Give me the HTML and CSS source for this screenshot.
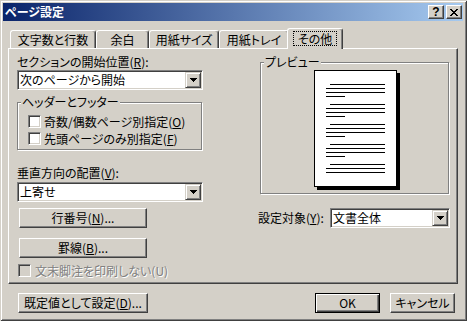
FILE: index.html
```html
<!DOCTYPE html>
<html lang="ja">
<head>
  <meta charset="UTF-8" />
  <title>ページ設定</title>
  <link rel="stylesheet" href="styles.css">
</head>
<body>

<div class="window">
  <div class="titlebar">
    <span class="title">ページ設定</span>
    <div class="caption-buttons">
      <span class="cap-btn help">?</span>
      <span class="cap-btn">
        <svg width="8" height="7" viewBox="0 0 8 7" shape-rendering="crispEdges"><path d="M0 0h2v1H0zM6 0h2v1H6zM1 1h2v1H1zM5 1h2v1H5zM2 2h4v1H2zM3 3h2v1H3zM2 4h4v1H2zM1 5h2v1H1zM5 5h2v1H5zM0 6h2v1H0zM6 6h2v1H6z"/></svg>
      </span>
    </div>
  </div>

  <div class="tabs">
    <div class="tab">文字数と行数</div>
    <div class="tab">余白</div>
    <div class="tab">用紙サイズ</div>
    <div class="tab">用紙トレイ</div>
    <div class="tab active"><span class="focus">その他</span></div>
  </div>

  <div class="panel">
    <!-- left column -->
    <div class="col-left">
      <div class="label">セクションの開始位置(<u>R</u>):</div>
      <div class="combo">
        <span class="combo-value">次のページから開始</span>
        <span class="combo-btn"><svg width="7" height="4" viewBox="0 0 7 4" shape-rendering="crispEdges"><path d="M0 0h7v1H0zM1 1h5v1H1zM2 2h3v1H2zM3 3h1v1H3z"/></svg></span>
      </div>

      <fieldset class="group">
        <legend>ヘッダーとフッター</legend>
        <label class="check"><span class="box"></span><span>奇数/偶数ページ別指定(<u>O</u>)</span></label>
        <label class="check"><span class="box"></span><span>先頭ページのみ別指定(<u>F</u>)</span></label>
      </fieldset>

      <div class="label label-gap">垂直方向の配置(<u>V</u>):</div>
      <div class="combo combo-tight">
        <span class="combo-value">上寄せ</span>
        <span class="combo-btn"><svg width="7" height="4" viewBox="0 0 7 4" shape-rendering="crispEdges"><path d="M0 0h7v1H0zM1 1h5v1H1zM2 2h3v1H2zM3 3h1v1H3z"/></svg></span>
      </div>

      <div class="btn btn-side">行番号(<u>N</u>)...</div>
      <div class="btn btn-side btn-lower">罫線(<u>B</u>)...</div>

      <label class="check disabled"><span class="box"></span><span>文末脚注を印刷しない(U)</span></label>
    </div>

    <!-- right column -->
    <div class="col-right">
      <fieldset class="group preview">
        <legend>プレビュー</legend>
        <svg class="page" width="86" height="120" viewBox="0 0 86 120" shape-rendering="crispEdges">
          <rect x="3" y="3" width="83" height="117" fill="#000"/>
          <rect x="0.5" y="0.5" width="82" height="116" fill="#fff" stroke="#000"/>
          <g fill="#000">
            <rect x="16" y="14" width="55" height="1"/>
            <rect x="12" y="18" width="59" height="1"/>
            <rect x="12" y="22" width="59" height="1"/>
            <rect x="12" y="26" width="19" height="1"/>
            <rect x="16" y="34" width="55" height="1"/>
            <rect x="12" y="38" width="59" height="1"/>
            <rect x="12" y="42" width="59" height="1"/>
            <rect x="12" y="46" width="19" height="1"/>
            <rect x="16" y="54" width="55" height="1"/>
            <rect x="12" y="58" width="59" height="1"/>
            <rect x="12" y="62" width="59" height="1"/>
            <rect x="12" y="66" width="19" height="1"/>
            <rect x="16" y="74" width="55" height="1"/>
            <rect x="12" y="78" width="59" height="1"/>
            <rect x="12" y="82" width="59" height="1"/>
            <rect x="12" y="86" width="19" height="1"/>
            <rect x="16" y="94" width="55" height="1"/>
            <rect x="12" y="98" width="59" height="1"/>
            <rect x="12" y="102" width="59" height="1"/>
          </g>
        </svg>
      </fieldset>

      <div class="apply-row">
        <span>設定対象(<u>Y</u>):</span>
        <div class="combo combo-small">
          <span class="combo-value">文書全体</span>
          <span class="combo-btn"><svg width="7" height="4" viewBox="0 0 7 4" shape-rendering="crispEdges"><path d="M0 0h7v1H0zM1 1h5v1H1zM2 2h3v1H2zM3 3h1v1H3z"/></svg></span>
        </div>
      </div>
    </div>
  </div>

  <div class="footer">
    <div class="btn btn-wide">既定値として設定(<u>D</u>)...</div>
    <div class="btn btn-default">OK</div>
    <div class="btn btn-cancel">キャンセル</div>
  </div>
</div>

</body>
</html>
```

FILE: styles.css
```css
* { box-sizing: border-box; }

body {
  margin: 0;
  font-family: "Noto Sans CJK JP", "Noto Sans", sans-serif;
  font-size: 12px;
  line-height: 14px;
  font-feature-settings: "palt";
  color: #000;
  background: #d4d0c8;
}

u { text-underline-offset: 1px; }

.window {
  width: 467px;
  height: 321px;
  padding: 3px 4px 4px 3px;
  background: #d4d0c8;
  box-shadow: inset 1px 1px #d4d0c8, inset -1px -1px #404040,
              inset 2px 2px #fff, inset -2px -2px #808080;
}

/* title bar */
.titlebar {
  height: 18px;
  display: flex;
  align-items: center;
  justify-content: space-between;
  padding: 0 1px 0 2px;
  background: linear-gradient(to right, #0a246a, #a6caf0);
}

.title {
  color: #fff;
  font-weight: bold;
}

.caption-buttons {
  display: flex;
  gap: 2px;
}

.cap-btn {
  width: 16px;
  height: 14px;
  display: flex;
  align-items: center;
  justify-content: center;
  background: #d4d0c8;
  border: 1px solid;
  border-color: #fff #404040 #404040 #fff;
  box-shadow: inset -1px -1px #808080;
}

.help {
  font-family: "Liberation Sans", Arial, sans-serif;
  font-weight: bold;
  font-size: 12px;
  line-height: 12px;
}

/* tabs */
.tabs {
  display: flex;
  align-items: flex-end;
  height: 20px;
  margin: 7px 0 0 5px;
  padding-left: 2px;
}

.tab {
  height: 18px;
  display: flex;
  align-items: center;
  justify-content: center;
  background: #d4d0c8;
  border: 1px solid;
  border-bottom: none;
  border-color: #fff #404040 #fff #fff;
  border-radius: 3px 3px 0 0;
  box-shadow: inset -1px 0 #808080;
}

.tab:nth-child(1) { width: 86px; }
.tab:nth-child(2) { width: 53px; }
.tab:nth-child(3) { width: 70px; }
.tab:nth-child(4) { width: 70px; }

.tab.active {
  position: relative;
  z-index: 1;
  width: 56px;
  height: 21px;
  margin: 0 -2px -1px;
  align-items: flex-start;
  padding-top: 2px;
}

.focus {
  border: 1px dotted #000;
  padding: 0 4px;
  line-height: 13px;
}

/* panel */
.panel {
  display: flex;
  width: 450px;
  height: 236px;
  margin-left: 5px;
  padding: 6px 0 0 8px;
  border: 1px solid;
  border-color: #fff #404040 #404040 #fff;
  box-shadow: inset -1px -1px #808080;
}

.col-left {
  width: 186px;
  display: flex;
  flex-direction: column;
  align-items: flex-start;
}

.col-right {
  width: 192px;
  margin-left: 55px;
}

.label-gap { margin-top: 16px; }

/* combo box */
.combo {
  display: flex;
  align-items: center;
  width: 186px;
  height: 20px;
  margin-top: 1px;
  padding: 1px;
  background: #fff;
  border: 1px solid;
  border-color: #808080 #fff #fff #808080;
  box-shadow: inset 1px 1px #404040, inset -1px -1px #d4d0c8;
}

.combo-tight { margin-top: 2px; }

.combo-value {
  flex: 1;
  padding-left: 1px;
  white-space: nowrap;
}

.combo-btn {
  width: 16px;
  height: 16px;
  display: flex;
  align-items: center;
  justify-content: center;
  background: #d4d0c8;
  border: 1px solid;
  border-color: #d4d0c8 #404040 #404040 #d4d0c8;
  box-shadow: inset 1px 1px #fff, inset -1px -1px #808080;
}

/* group boxes */
.group {
  width: 185px;
  margin: 5px 0 0;
  padding: 4px 0 2px;
  min-width: 0;
  border: 1px solid #808080;
  box-shadow: inset 1px 1px #fff, 1px 1px #fff;
}

.group legend {
  margin-left: 3px;
  padding: 0 1px;
  background: #d4d0c8;
}

.preview {
  width: 189px;
  margin: 0 0 0 2px;
  padding: 1px 0 3px;
}

.page {
  display: block;
  margin-left: 53px;
}

/* check boxes */
.check {
  display: flex;
  align-items: center;
  gap: 3px;
  height: 17px;
  padding-left: 10px;
  white-space: nowrap;
}

.box {
  width: 13px;
  height: 13px;
  background: #fff;
  border: 1px solid;
  border-color: #808080 #fff #fff #808080;
  box-shadow: inset 1px 1px #404040, inset -1px -1px #d4d0c8;
}

.check.disabled {
  margin-top: 4px;
  padding-left: 1px;
  gap: 4px;
  color: #808080;
  text-shadow: 1px 1px #fff;
}

.check.disabled .box { background: #d4d0c8; }

/* buttons */
.btn {
  height: 20px;
  display: flex;
  align-items: center;
  justify-content: center;
  background: #d4d0c8;
  border: 1px solid;
  border-color: #fff #404040 #404040 #fff;
  box-shadow: inset -1px -1px #808080;
  white-space: nowrap;
}

.btn-side {
  width: 128px;
  margin: 6px 0 0 2px;
}

.btn-side.btn-lower { margin-top: 10px; }

.apply-row {
  display: flex;
  align-items: center;
  justify-content: space-between;
  margin-top: 14px;
}

.combo-small {
  width: 120px;
  margin-top: 0;
}

/* footer */
.footer {
  display: flex;
  margin-top: 9px;
  padding: 0 8px 0 15px;
}

.btn-wide { width: 130px; }

.btn-default {
  width: 65px;
  margin-left: auto;
  border-color: #000;
  box-shadow: inset 1px 1px #fff, inset -1px -1px #404040, inset -2px -2px #808080;
}

.btn-cancel {
  width: 65px;
  margin-left: 10px;
}
```
